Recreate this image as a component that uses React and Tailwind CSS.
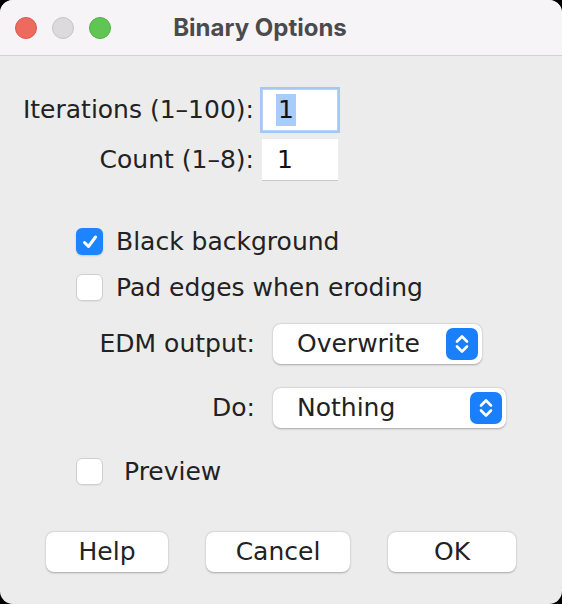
import React from 'react';

// Binary Options dialog (macOS look)

function Stepper() {
  return (
    <div className="w-[32px] h-[32px] rounded-[7px] bg-[#1a7ffb] flex items-center justify-center">
      <svg width="18" height="24" viewBox="0 0 18 24" fill="none" stroke="white" strokeWidth="2.6" strokeLinecap="round" strokeLinejoin="round">
        <path d="M4 9.5 L9 4.5 L14 9.5" />
        <path d="M4 14.5 L9 19.5 L14 14.5" />
      </svg>
    </div>
  );
}

function Checkbox({ checked }) {
  if (checked) {
    return (
      <div className="w-[27px] h-[27px] rounded-[6px] bg-[#1b84fe] flex items-center justify-center shadow-[0_1px_2px_rgba(0,0,0,0.15)]">
        <svg width="18" height="18" viewBox="0 0 18 18" fill="none" stroke="white" strokeWidth="3" strokeLinecap="round" strokeLinejoin="round">
          <path d="M3.5 9.5 L7.5 13.5 L14.5 4" />
        </svg>
      </div>
    );
  }
  return <div className="w-[27px] h-[27px] rounded-[6px] bg-white border border-[#cfcfcf] shadow-[0_1px_1px_rgba(0,0,0,0.05)]" />;
}

function Select({ value, width }) {
  return (
    <div className={`${width} h-[40px] bg-white rounded-[8px] shadow-[0_0.5px_2px_rgba(0,0,0,0.3)] flex items-center justify-between pl-[24px] pr-[4px]`}>
      <span>{value}</span>
      <Stepper />
    </div>
  );
}

function Button({ label, width }) {
  return (
    <button className={`${width} h-[40px] bg-white rounded-[8px] shadow-[0_0.5px_2px_rgba(0,0,0,0.3)] flex items-center justify-center text-[#222]`}>
      {label}
    </button>
  );
}

export default function App() {
  return (
    <div className="w-[562px] h-[604px] bg-black">
      <div
        className="w-full h-full rounded-[13px] overflow-hidden bg-[#ececec] flex flex-col text-[25px] leading-[28px] text-[#222]"
        style={{ fontFamily: '"DejaVu Sans", "Noto Sans", sans-serif' }}
      >
        {/* Title bar */}
        <div className="h-[56px] bg-[#f6f4f7] border-b border-[#d3d3d3] flex items-center relative shrink-0">
          <div className="flex items-center gap-[15px] pl-[15px]">
            <div className="w-[22px] h-[22px] rounded-full bg-[#ee6a5f] border border-[#d9574d]" />
            <div className="w-[22px] h-[22px] rounded-full bg-[#dcdadd] border border-[#c6c4c7]" />
            <div className="w-[22px] h-[22px] rounded-full bg-[#61c554] border border-[#4fae43]" />
          </div>
          <div
            className="absolute left-0 right-0 text-center text-[24px] font-bold text-[#4b4a4c] pr-[42px]"
            style={{ fontFamily: 'Inter, "Noto Sans", sans-serif' }}
          >
            Binary Options
          </div>
        </div>

        {/* Body */}
        <div className="flex flex-col pt-[33px]">
          <div className="flex items-center h-[42px]">
            <div className="w-[254px] text-right">Iterations (1–100):</div>
            <div className="ml-[8px] w-[76px] h-[42px] bg-white border border-[#bcd3f0] shadow-[0_0_0_2px_#a3c7f6] flex items-center pl-[13px]">
              <span className="bg-[#a9cdfa] px-[2px] leading-[32px] text-[#111]">1</span>
            </div>
          </div>
          <div className="flex items-center h-[42px] mt-[8px]">
            <div className="w-[254px] text-right">Count (1–8):</div>
            <div className="ml-[8px] w-[76px] h-[42px] bg-white border-b border-[#c9c9c9] flex items-center pl-[15px] text-[#111]">
              1
            </div>
          </div>

          <div className="flex items-center h-[27px] mt-[47px] pl-[76px] gap-[13px]">
            <Checkbox checked />
            <span>Black background</span>
          </div>
          <div className="flex items-center h-[27px] mt-[19px] pl-[76px] gap-[13px]">
            <Checkbox />
            <span>Pad edges when eroding</span>
          </div>

          <div className="flex items-center h-[40px] mt-[23px]">
            <div className="w-[255px] text-right">EDM output:</div>
            <div className="ml-[18px]">
              <Select value="Overwrite" width="w-[209px]" />
            </div>
          </div>
          <div className="flex items-center h-[40px] mt-[24px]">
            <div className="w-[255px] text-right">Do:</div>
            <div className="ml-[18px]">
              <Select value="Nothing" width="w-[233px]" />
            </div>
          </div>

          <div className="flex items-center h-[27px] mt-[30px] pl-[76px] gap-[21px]">
            <Checkbox />
            <span>Preview</span>
          </div>

          <div className="flex items-center h-[40px] mt-[47px] pl-[46px]">
            <Button label="Help" width="w-[122px]" />
            <div className="ml-[38px]"><Button label="Cancel" width="w-[144px]" /></div>
            <div className="ml-[38px]"><Button label="OK" width="w-[128px]" /></div>
          </div>
        </div>
      </div>
    </div>
  );
}
